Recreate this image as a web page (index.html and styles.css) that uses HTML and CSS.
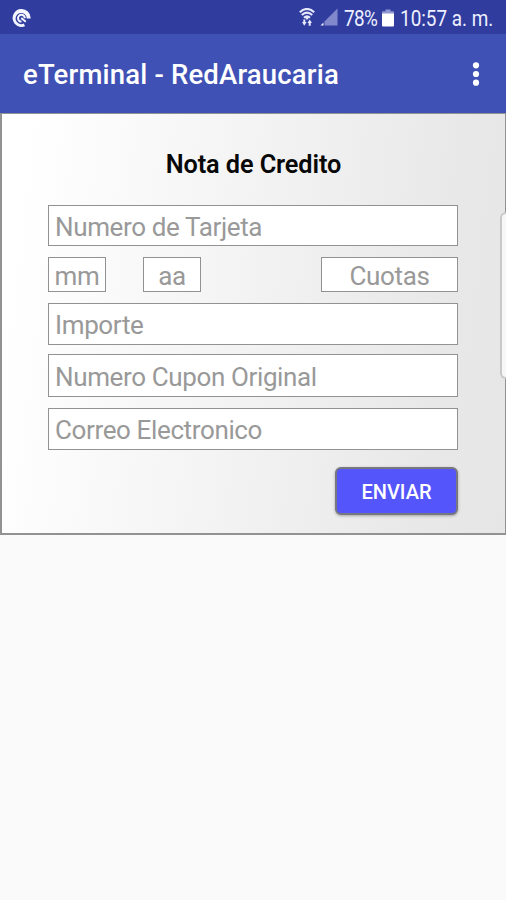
FILE: index.html
```html
<!DOCTYPE html>
<html lang="es">
<head>
<meta charset="utf-8">
<title>eTerminal - RedAraucaria</title>
<link rel="stylesheet" href="styles.css">
</head>
<body>
<div class="status">
  <svg class="app-icon" width="20" height="20" viewBox="0 0 20 20">
    <path d="M19.600 10.500A9 9 0 1 0 14 18.300L12.800 15.500A5.600 5.600 0 1 1 15.800 10.500Z" fill="#f4f5ff"/>
    <path d="M10.500 13.600A3.400 3.400 0 1 1 13.800 10.200M10.200 10l4.600 3.800" fill="none" stroke="#f4f5ff" stroke-width="2"/>
  </svg>
  <div class="indicators">
    <svg class="wifi" width="16" height="19" viewBox="0 0 16 19" fill="none" stroke="#e6e8fa">
      <path d="M.8 4.200Q8-2.200 15.200 4.200M2.800 7Q8 2.200 13.200 7M5 9.700Q8 6.800 11 9.700" stroke-width="2.100"/>
      <path d="M5.500 9H10.500L8 12Z" fill="#e6e8fa" stroke="none"/>
      <path d="M4.300 11.500H6.300V14H7.600L5.300 17.800 3 14H4.300ZM9.700 17.800H11.700V15H13L10.700 11.500 8.400 15H9.700Z" fill="#e6e8fa" stroke="none"/>
    </svg>
    <svg class="signal" width="18" height="18" viewBox="0 0 18 18">
      <path d="M17.500 .5V17.500H4.500V13.500Z" fill="#8189cc"/>
      <path d="M3.500 14.500V17.500H.5Z" fill="#f0f1ff"/>
    </svg>
    <span class="percent">78%</span>
    <svg class="battery" width="12" height="18" viewBox="0 0 12 18">
      <path d="M3.500 .5h5v1.800H11a1 1 0 0 1 1 1V5H0V3.300a1 1 0 0 1 1-1h2.500Z" fill="#8f97d3"/>
      <path d="M0 4.500H12V16.500a1 1 0 0 1-1 1H1a1 1 0 0 1-1-1Z" fill="#fff"/>
    </svg>
    <span class="clock">10:57 a. m.</span>
  </div>
</div>
<header class="bar">
  <h1 class="bar-title">eTerminal - RedAraucaria</h1>
  <svg class="more" width="8" height="24" viewBox="0 0 8 24" fill="#fff">
    <circle cx="4" cy="3.300" r="3.100"/><circle cx="4" cy="12" r="3.100"/><circle cx="4" cy="20.700" r="3.100"/>
  </svg>
</header>
<main class="panel">
  <h2 class="heading">Nota de Credito</h2>
  <div class="field card"><span>Numero de Tarjeta</span></div>
  <div class="row">
    <div class="field small"><span>mm</span></div>
    <div class="field small year"><span>aa</span></div>
    <div class="field small quotas"><span>Cuotas</span></div>
  </div>
  <div class="field amount"><span>Importe</span></div>
  <div class="field coupon"><span>Numero Cupon Original</span></div>
  <div class="field email"><span>Correo Electronico</span></div>
  <button class="send" type="button"><span>ENVIAR</span></button>
  <div class="edge"></div>
</main>
</body>
</html>
```
FILE: styles.css
```css
* { box-sizing: border-box; }
body {
  margin: 0;
  min-height: 900px;
  background: #fafafa;
  font-family: Roboto, "Liberation Sans", sans-serif;
  overflow: hidden;
}
.status {
  display: flex;
  justify-content: space-between;
  height: 34px;
  padding: 0 13px 0 11px;
  background: #303d9f;
  color: #eef0ff;
  font-size: 21.5px;
  line-height: 37px;
}
.app-icon { margin-top: 8px; }
.indicators { display: flex; white-space: nowrap; }
.wifi { margin: 8px 5px 0 0; }
.signal { margin: 8px 6px 0 0; }
.percent,
.clock {
  transform: scaleX(0.88);
  transform-origin: left center;
}
.percent { width: 33px; margin-right: 5px; letter-spacing: -0.7px; }
.battery { margin: 9px 6px 0 0; }
.clock { width: 93px; }
.bar {
  display: flex;
  align-items: center;
  justify-content: space-between;
  height: 79px;
  padding: 0 26px 0 23px;
  background: #3f51b5;
}
.bar-title {
  margin: 3px 0 0;
  color: #fff;
  font-size: 27.5px;
  line-height: 34px;
  font-weight: 500;
  letter-spacing: 0.18px;
}
.more { margin-top: 1px; }
.panel {
  position: relative;
  display: flex;
  flex-direction: column;
  height: 422px;
  padding: 0 46px;
  border: 2px solid #929292;
  border-width: 1px 1px 2px 2px;
  background: linear-gradient(97deg, #fff 5%, #f3f3f3 48%, #e8e8e8 85%, #e6e6e6);
}
.heading {
  margin: 35px 0 25px;
  font-size: 25.3px;
  line-height: 31px;
  font-weight: 600;
  letter-spacing: -0.1px;
  text-align: center;
  color: #080808;
}
.field {
  display: flex;
  align-items: center;
  width: 410px;
  height: 42px;
  padding: 2px 0 0 6px;
  border: 1px solid #929292;
  background: #fff;
  color: #999;
  font-size: 26px;
  line-height: 32px;
  letter-spacing: -0.37px;
  white-space: nowrap;
}
.card { height: 41px; }
.row { display: flex; width: 410px; margin: 11px 0; }
.small { width: 58px; height: 35px; padding: 3px 0 0; justify-content: center; }
.year { margin-left: 37px; }
.quotas { width: 137px; margin-left: auto; }
.coupon { height: 43px; margin-top: 9px; }
.email { height: 42px; margin-top: 11px; }
.send {
  align-self: flex-end;
  width: 123px;
  height: 48px;
  margin: 17px 1px 0 0;
  padding: 2px 0 0;
  border: 2px solid #77777f;
  border-radius: 6px;
  background: #5555fc;
  box-shadow: 0 1px 3px rgba(0, 0, 0, .3);
  color: #fff;
  font: 500 20px/24px Roboto, sans-serif;
}
.edge {
  position: absolute;
  top: 98px;
  right: -1px;
  width: 6px;
  height: 167px;
  border: 2px solid #c8c8c8;
  border-right: 0;
  border-radius: 6px 0 0 6px;
  background: #f7f7f7;
}
```
